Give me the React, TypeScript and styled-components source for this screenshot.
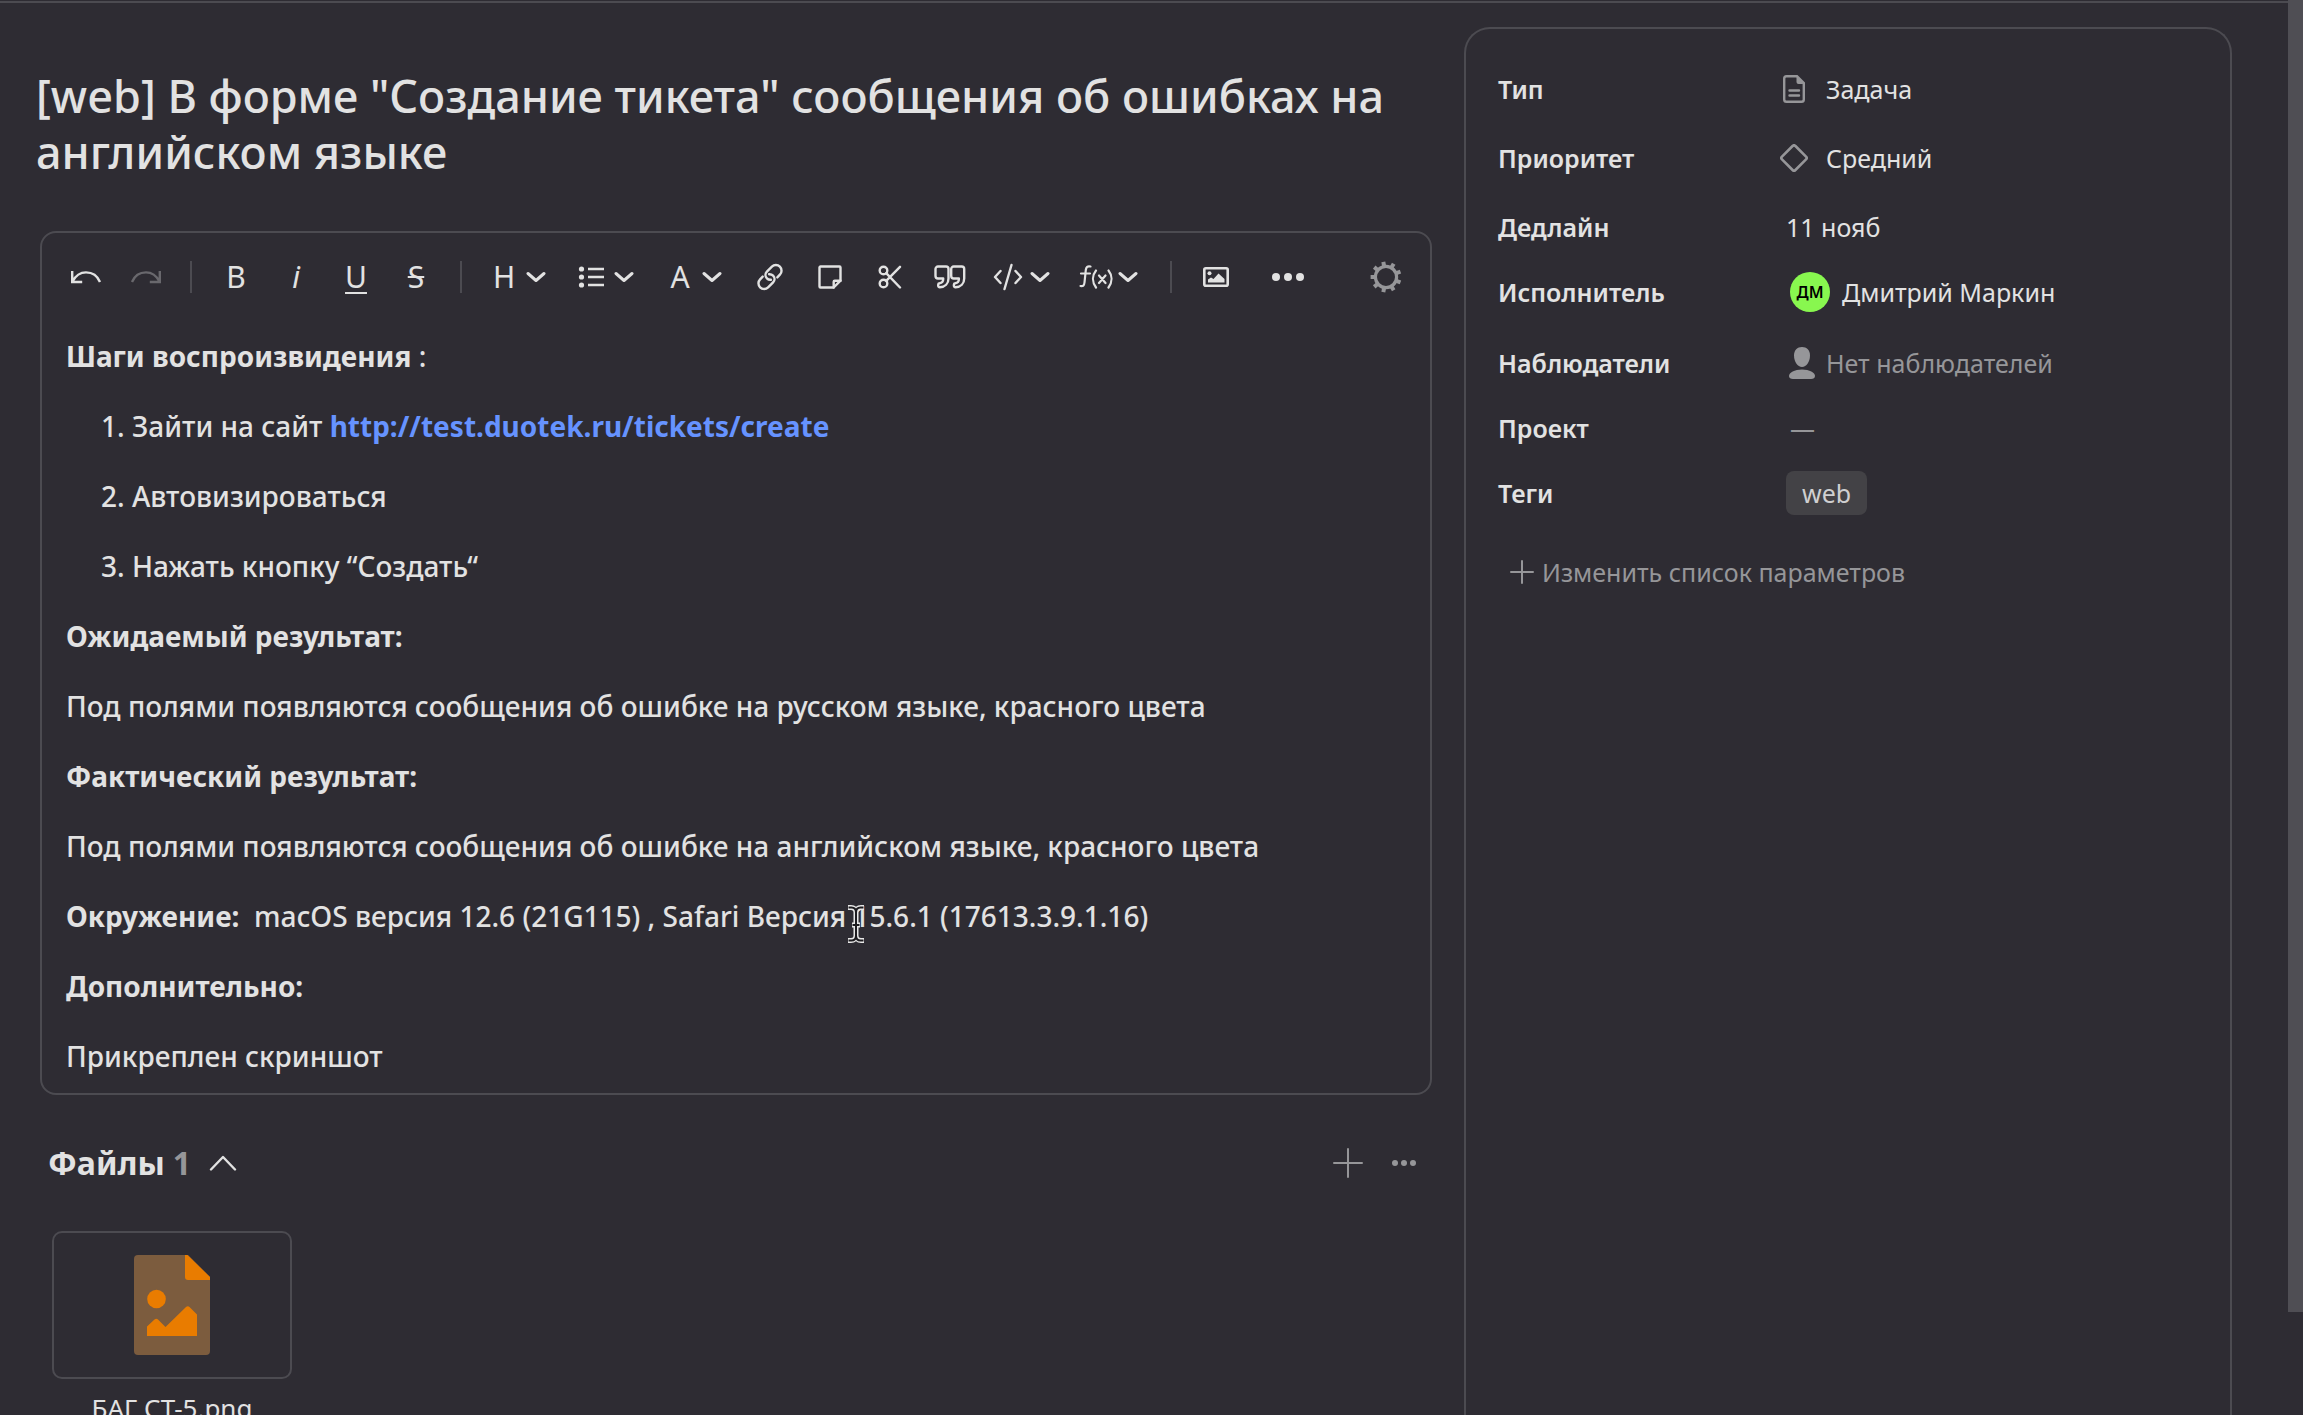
import React from 'react';
import styled, { createGlobalStyle } from 'styled-components';

const color = {
  bg: '#2e2c33',
  line: '#4c4b51',
  text: '#e2e2e2',
  muted: '#969699',
  link: '#6693ff',
  orange: '#e97c00',
};

const GlobalStyle = createGlobalStyle`
  *, *::before, *::after { box-sizing: border-box; }
  body {
    margin: 0;
    background: ${color.bg};
    color: ${color.text};
    font-family: "Noto Sans", "Open Sans", sans-serif;
    font-size: 28px;
    line-height: 42px;
    overflow: hidden;
  }
  button { font: inherit; color: inherit; background: none; border: 0; padding: 0; cursor: pointer; }
  svg { display: block; flex: none; }
`;

const Page = styled.div`
  display: grid;
  grid-template-columns: minmax(0, 1fr) 768px 56px 15px;
  height: 100vh;
  overflow: hidden;
`;

const TopRule = styled.div`
  position: absolute;
  top: 1px;
  left: 0;
  right: 15px;
  height: 2px;
  background: ${color.line};
`;

const Main = styled.main`
  display: flex;
  flex-direction: column;
  padding: 68px 32px 0 36px;
  min-width: 0;
`;

const Title = styled.h1`
  margin: 0 0 51px;
  font-size: 45px;
  line-height: 56px;
  font-weight: 500;
`;

const Editor = styled.section`
  margin-left: 4px;
  border: 2px solid ${color.line};
  border-radius: 16px;
  padding: 14px 14px 16px;
`;

const Toolbar = styled.div`
  display: flex;
  align-items: center;
  height: 60px;
`;

const ToolButton = styled.button<{ $dim?: boolean }>`
  display: flex;
  align-items: center;
  justify-content: center;
  width: 60px;
  height: 60px;
  flex: none;
  color: ${p => (p.$dim ? '#69686d' : color.text)};
`;

const MenuButton = styled(ToolButton)`
  width: 88px;
  justify-content: flex-start;
  padding-left: 12px;
`;

const MenuGlyph = styled.span`
  display: flex;
  justify-content: center;
  width: 32px;
  margin-right: 6px;
`;

const Letter = styled.span<{ $variant?: 'italic' | 'underline' | 'strike' }>`
  font-size: 30px;
  line-height: 32px;
  font-style: ${p => (p.$variant === 'italic' ? 'italic' : 'normal')};
  text-decoration: ${p =>
    p.$variant === 'underline' ? 'underline 2px' : p.$variant === 'strike' ? 'line-through 2px' : 'none'};
  text-underline-offset: 4px;
`;

const Separator = styled.span`
  width: 2px;
  height: 32px;
  margin: 0 14px;
  background: ${color.line};
`;

const MoreButton = styled(ToolButton)`
  margin-left: 12px;
`;

const SettingsButton = styled(ToolButton)`
  margin-left: auto;
  color: ${color.muted};
`;

const Content = styled.div`
  padding: 28px 10px 0;
  font-weight: 500;
`;

const Paragraph = styled.p`
  margin: 0 0 28px;
  &:last-child { margin-bottom: 0; }
`;

const Strong = styled.strong`
  font-weight: 700;
`;

const Steps = styled.ol`
  margin: 0 0 28px;
  padding-left: 66px;
`;

const Step = styled.li`
  & + & { margin-top: 28px; }
`;

const Link = styled.a`
  color: ${color.link};
  font-weight: 700;
  text-decoration: none;
`;

const CaretAnchor = styled.span`
  position: relative;
`;

const Caret = styled.svg`
  position: absolute;
  left: 0;
  top: 8px;
`;

const FilesHeader = styled.header`
  display: flex;
  align-items: center;
  padding: 0 12px;
  margin-top: 44px;
  height: 48px;
`;

const FilesTitle = styled.h2`
  margin: 0;
  font-size: 32px;
  line-height: 48px;
  font-weight: 700;
`;

const Count = styled.span`
  margin-left: 8px;
  color: ${color.muted};
`;

const IconButton = styled.button`
  display: flex;
  align-items: center;
  justify-content: center;
  width: 56px;
  height: 48px;
`;

const CollapseButton = styled(IconButton)`
  margin-left: 4px;
`;

const Actions = styled.div`
  display: flex;
  margin-left: auto;
  margin-right: -12px;
  color: ${color.muted};
`;

const FileCard = styled.figure`
  width: 240px;
  margin: 44px 0 0 16px;
`;

const Preview = styled.a`
  display: flex;
  align-items: center;
  justify-content: center;
  height: 148px;
  border: 2px solid ${color.line};
  border-radius: 10px;
`;

const FileName = styled.figcaption`
  margin-top: 8px;
  font-size: 26px;
  line-height: 42px;
  text-align: center;
`;

const Aside = styled.aside`
  margin-top: 27px;
  padding: 26px 32px;
  border: 2px solid ${color.line};
  border-bottom: 0;
  border-radius: 26px 26px 0 0;
  font-size: 25px;
  height: 100%;
`;

const Params = styled.dl`
  margin: 0;
`;

const Row = styled.div<{ $gap: number }>`
  display: flex;
  align-items: center;
  height: 44px;
  margin-top: ${p => p.$gap}px;
  white-space: nowrap;
`;

const Label = styled.dt`
  width: 288px;
  font-weight: 600;
`;

const Value = styled.dd`
  margin: 0;
`;

const ValueButton = styled.button<{ $muted?: boolean }>`
  display: flex;
  align-items: center;
  height: 44px;
  color: ${p => (p.$muted ? color.muted : color.text)};
`;

const IconSlot = styled.span<{ $wide?: boolean }>`
  display: flex;
  justify-content: center;
  width: ${p => (p.$wide ? 48 : 40)}px;
  margin-left: ${p => (p.$wide ? -8 : 0)}px;
  padding-right: ${p => (p.$wide ? 16 : 8)}px;
`;

const Avatar = styled.span`
  display: flex;
  align-items: center;
  justify-content: center;
  width: 40px;
  height: 40px;
  margin: 0 12px 0 4px;
  border-radius: 50%;
  background: #88f74f;
  color: #000;
  font-size: 16px;
  line-height: 20px;
  font-weight: 600;
`;

const EmptyValue = styled.span`
  padding-left: 4px;
`;

const Tag = styled.span`
  display: block;
  padding: 0 16px;
  border-radius: 8px;
  background: #434246;
  color: #cfcfd0;
  line-height: 44px;
`;

const AddParam = styled.button`
  display: flex;
  align-items: center;
  gap: 8px;
  margin: 36px 0 0 12px;
  color: ${color.muted};
`;

const ScrollTrack = styled.div`
  grid-column: 4;
  height: 100vh;
`;

const ScrollThumb = styled.div`
  height: 92.7%;
  background: #4f4e54;
`;

type Stroke = { w: number; h: number; s?: number; children: React.ReactNode };
const Icon = ({ w, h, s = 2.4, children }: Stroke) => (
  <svg width={w} height={h} viewBox={`0 0 ${w} ${h}`} fill="none" stroke="currentColor" strokeWidth={s} strokeLinejoin="round" strokeLinecap="round" aria-hidden="true">
    {children}
  </svg>
);

const Undo = () => (
  <Icon w={32} h={16}>
    <path d="M2.200 2v11h10M2.500 12.500C6 6 11 3.400 16 3.400c6.500 0 11.500 3.600 14 9.600" strokeLinecap="butt" strokeLinejoin="miter" />
  </Icon>
);
const Redo = () => (
  <Icon w={32} h={16}>
    <path d="M29.800 2v11h-10M29.500 12.500C26 6 21 3.400 16 3.400 9.500 3.400 4.500 7 2 13" strokeLinecap="butt" strokeLinejoin="miter" />
  </Icon>
);
const Chevron = () => (
  <Icon w={20} h={12} s={3}>
    <path d="M2 2.500l8 7 8-7" />
  </Icon>
);
const List = () => (
  <Icon w={28} h={24}>
    <path d="M10 4h16M10 12h16M10 20h16" strokeLinecap="butt" strokeWidth="2.6" />
    <g fill="currentColor" stroke="none">
      <circle cx="3.500" cy="4" r="2.600" />
      <circle cx="3.500" cy="12" r="2.600" />
      <circle cx="3.500" cy="20" r="2.600" />
    </g>
  </Icon>
);
const Chain = () => (
  <Icon w={28} h={28}>
    <path d="M14.900 16.800a5 5 0 0 1-4-1.500c-1.900-1.900-1.900-4.700 0-6.600l5-5a5.700 5.700 0 0 1 8 0 5.700 5.700 0 0 1 0 8l-2.600 2.700" />
    <path d="M13.100 11.200a5 5 0 0 1 4 1.500c1.900 1.900 1.900 4.700 0 6.600l-5 5a5.700 5.700 0 0 1-8 0 5.700 5.700 0 0 1 0-8l2.600-2.700" />
  </Icon>
);
const Note = () => (
  <Icon w={24} h={24}>
    <path d="M2.500 1.500h19a1 1 0 0 1 1 1v13.200l-6.800 6.800H2.500a1 1 0 0 1-1-1v-19a1 1 0 0 1 1-1z" />
    <path d="M15.700 22.500v-5.800a1 1 0 0 1 1-1h5.800" />
  </Icon>
);
const Cut = () => (
  <Icon w={24} h={24}>
    <circle cx="5.500" cy="5.500" r="3.800" />
    <circle cx="5.500" cy="18.500" r="3.800" />
    <path d="M8.200 8.200L22 22.500M8.200 15.800L22 1.800" />
  </Icon>
);
const Quote = () => (
  <Icon w={32} h={24}>
    {[0, 15.700].map(x => (
      <path key={x} transform={`translate(${x} 0)`} d="M4 1.500h8a2.500 2.500 0 0 1 2.500 2.500v9.500c0 5-3.500 8.500-8.700 8.800a1.500 1.500 0 0 1-1.600-1.500v-1c0-.8.500-1.400 1.300-1.500 2.600-.4 3.700-1.600 3.700-4.300v-.5H4A2.500 2.500 0 0 1 1.500 11V4A2.500 2.500 0 0 1 4 1.500z" />
    ))}
  </Icon>
);
const Code = () => (
  <Icon w={32} h={28}>
    <path d="M8.500 8L3 14l5.500 6M23.500 8l5.500 6-5.500 6M19.500 2l-7 24" />
  </Icon>
);
const Formula = () => (
  <Icon w={34} h={26} s={2.2}>
    <path d="M11.500 2.500C8.500 1.800 7.200 3 6.800 6L5.500 18.500c-.3 3-1.500 4-4 3.500M2 9.500h9" />
    <path d="M17 6.500c-4 5-4 11.500 0 17M29.500 6.500c4 5 4 11.500 0 17M20 11.500l6.500 7.500M26.500 11.500L20 19" />
  </Icon>
);
const Picture = () => (
  <Icon w={26} h={20}>
    <rect x="1.300" y="1.300" width="23.400" height="17.400" rx="1.500" strokeWidth="2.600" />
    <g fill="currentColor" stroke="none">
      <circle cx="6.500" cy="6.200" r="2" />
      <path d="M5 15.500v-3l3-2 2.500 1.500 5-5.500 6 5.500v3.500z" />
    </g>
  </Icon>
);
const Dots = ({ r, gap }: { r: number; gap: number }) => (
  <svg width={gap * 2 + r * 2} height={r * 2} fill="currentColor" aria-hidden="true">
    {[0, 1, 2].map(i => (
      <circle key={i} cx={r + i * gap} cy={r} r={r} />
    ))}
  </svg>
);
const Gear = () => (
  <Icon w={32} h={32} s={3.2}>
    <circle cx="16" cy="16" r="10.600" />
    {Array.from({ length: 9 }, (_, i) => (
      <path key={i} d="M16 5V0.600" strokeWidth="4" strokeLinecap="butt" transform={`rotate(${i * 40 - 10} 16 16)`} />
    ))}
  </Icon>
);
const Plus = ({ size }: { size: number }) => (
  <Icon w={size} h={size} s={2}>
    <path d={`M${size / 2} 1v${size - 2}M1 ${size / 2}h${size - 2}`} />
  </Icon>
);
const ChevronUp = () => (
  <Icon w={28} h={16} s={2.400}>
    <path d="M2 14.500L14 2l12 12.500" />
  </Icon>
);
const Doc = () => (
  <svg width="22" height="28" viewBox="0 0 22 28" fill="none" stroke={color.muted} strokeWidth="2.400" aria-hidden="true">
    <path d="M14 1.200H3.500A2.300 2.300 0 0 0 1.200 3.500v21a2.300 2.300 0 0 0 2.300 2.300h15a2.300 2.300 0 0 0 2.300-2.300V8z" />
    <path d="M13.500 1l7 8h-5a2 2 0 0 1-2-2z" fill={color.muted} stroke="none" />
    <path d="M6.500 15.500h9.500M6.500 20.500h9.500" strokeLinecap="round" />
  </svg>
);
const Diamond = () => (
  <svg width="28" height="28" viewBox="0 0 28 28" fill="none" stroke={color.muted} strokeWidth="2.600" aria-hidden="true">
    <rect x="4.500" y="4.500" width="19" height="19" rx="2" transform="rotate(45 14 14)" />
  </svg>
);
const Person = () => (
  <svg width="26" height="32" viewBox="0 0 26 32" fill={color.muted} aria-hidden="true">
    <path d="M13 0c4.800 0 8 3.200 8 8.500C21 14.500 17.500 20 13 20S5 14.500 5 8.500C5 3.200 8.200 0 13 0z" />
    <path d="M13 22.500c7.500 0 13 3 13 6.500 0 2-1.500 3-4 3H4c-2.500 0-4-1-4-3 0-3.500 5.500-6.500 13-6.500z" />
  </svg>
);
const ImageFile = () => (
  <svg width="76" height="100" viewBox="0 0 76 100" aria-hidden="true">
    <path d="M4 0h50l22 22v74a4 4 0 0 1-4 4H4a4 4 0 0 1-4-4V4a4 4 0 0 1 4-4z" fill="#7c5c3e" />
    <path d="M51 0h2.500L76 22v3H54a3 3 0 0 1-3-3z" fill={color.orange} />
    <circle cx="22.500" cy="44" r="9.300" fill={color.orange} />
    <path d="M13 81v-9.500l7.500-7a2.500 2.500 0 0 1 3.500 0l7.500 7.500L52 52a2.500 2.500 0 0 1 3.500 0l7.500 7.500V81z" fill={color.orange} />
  </svg>
);
const TextCursor = () => (
  <Caret width="20" height="38" viewBox="0 0 20 38" fill="none" aria-hidden="true">
    <path d="M2 2.500h3c3 0 5 2 5 5v23c0 3-2 5-5 5H2M18 2.500h-3c-3 0-5 2-5 5v23c0 3 2 5 5 5h3M6 20h8" stroke="#e8e8e8" strokeWidth="5" />
    <path d="M2.500 2.500h3c3 0 4.500 2 4.500 5v23c0 3-1.500 5-4.500 5h-3M17.500 2.500h-3c-3 0-4.500 2-4.500 5v23c0 3 1.500 5 4.500 5h3M6.500 20h7" stroke="#1c1b1f" strokeWidth="2" />
  </Caret>
);

const Menu = ({ label, children }: { label: string; children: React.ReactNode }) => (
  <MenuButton aria-label={label} aria-haspopup="menu">
    <MenuGlyph>{children}</MenuGlyph>
    <Chevron />
  </MenuButton>
);

export default function App() {
  return (
    <>
      <GlobalStyle />
      <TopRule />
      <Page>
        <Main>
          <Title>[web] В форме "Создание тикета" сообщения об ошибках на английском языке</Title>
          <Editor>
            <Toolbar role="toolbar">
              <ToolButton aria-label="Отменить"><Undo /></ToolButton>
              <ToolButton aria-label="Повторить" $dim><Redo /></ToolButton>
              <Separator />
              <ToolButton><Letter>B</Letter></ToolButton>
              <ToolButton><Letter $variant="italic">i</Letter></ToolButton>
              <ToolButton><Letter $variant="underline">U</Letter></ToolButton>
              <ToolButton><Letter $variant="strike">S</Letter></ToolButton>
              <Separator />
              <Menu label="Заголовок"><Letter>H</Letter></Menu>
              <Menu label="Список"><List /></Menu>
              <Menu label="Цвет"><Letter>A</Letter></Menu>
              <ToolButton aria-label="Ссылка"><Chain /></ToolButton>
              <ToolButton aria-label="Заметка"><Note /></ToolButton>
              <ToolButton aria-label="Кат"><Cut /></ToolButton>
              <ToolButton aria-label="Цитата"><Quote /></ToolButton>
              <Menu label="Код"><Code /></Menu>
              <Menu label="Формула"><Formula /></Menu>
              <Separator />
              <ToolButton aria-label="Изображение"><Picture /></ToolButton>
              <MoreButton aria-label="Ещё"><Dots r={4} gap={12} /></MoreButton>
              <SettingsButton aria-label="Настройки"><Gear /></SettingsButton>
            </Toolbar>
            <Content>
              <Paragraph><Strong>Шаги воспроизвидения</Strong> :</Paragraph>
              <Steps>
                <Step>Зайти на сайт <Link href="http://test.duotek.ru/tickets/create">http://test.duotek.ru/tickets/create</Link></Step>
                <Step>Автовизироваться</Step>
                <Step>Нажать кнопку “Создать“</Step>
              </Steps>
              <Paragraph><Strong>Ожидаемый результат:</Strong></Paragraph>
              <Paragraph>Под полями появляются сообщения об ошибке на русском языке, красного цвета</Paragraph>
              <Paragraph><Strong>Фактический результат:</Strong></Paragraph>
              <Paragraph>Под полями появляются сообщения об ошибке на английском языке, красного цвета</Paragraph>
              <Paragraph>
                <Strong>Окружение:</Strong>&nbsp; macOS версия 12.6 (21G115) , Safari Версия<CaretAnchor><TextCursor /></CaretAnchor> 15.6.1 (17613.3.9.1.16)
              </Paragraph>
              <Paragraph><Strong>Дополнительно:</Strong></Paragraph>
              <Paragraph>Прикреплен скриншот</Paragraph>
            </Content>
          </Editor>
          <FilesHeader>
            <FilesTitle>Файлы<Count>1</Count></FilesTitle>
            <CollapseButton aria-label="Свернуть"><ChevronUp /></CollapseButton>
            <Actions>
              <IconButton aria-label="Добавить файл"><Plus size={30} /></IconButton>
              <IconButton aria-label="Действия с файлами"><Dots r={3} gap={9} /></IconButton>
            </Actions>
          </FilesHeader>
          <FileCard>
            <Preview href="#" aria-label="Открыть файл"><ImageFile /></Preview>
            <FileName>БАГ СТ-5.png</FileName>
          </FileCard>
        </Main>
        <Aside>
          <Params>
            <Row $gap={12}>
              <Label>Тип</Label>
              <Value><ValueButton><IconSlot $wide><Doc /></IconSlot>Задача</ValueButton></Value>
            </Row>
            <Row $gap={25}>
              <Label>Приоритет</Label>
              <Value><ValueButton><IconSlot $wide><Diamond /></IconSlot>Средний</ValueButton></Value>
            </Row>
            <Row $gap={25}>
              <Label>Дедлайн</Label>
              <Value><ValueButton>11 нояб</ValueButton></Value>
            </Row>
            <Row $gap={21}>
              <Label>Исполнитель</Label>
              <Value><ValueButton><Avatar>ДМ</Avatar>Дмитрий Маркин</ValueButton></Value>
            </Row>
            <Row $gap={27}>
              <Label>Наблюдатели</Label>
              <Value><ValueButton $muted><IconSlot><Person /></IconSlot>Нет наблюдателей</ValueButton></Value>
            </Row>
            <Row $gap={21}>
              <Label>Проект</Label>
              <Value><ValueButton $muted><EmptyValue>—</EmptyValue></ValueButton></Value>
            </Row>
            <Row $gap={21}>
              <Label>Теги</Label>
              <Value><Tag>web</Tag></Value>
            </Row>
          </Params>
          <AddParam><Plus size={24} />Изменить список параметров</AddParam>
        </Aside>
        <ScrollTrack><ScrollThumb /></ScrollTrack>
      </Page>
    </>
  );
}
